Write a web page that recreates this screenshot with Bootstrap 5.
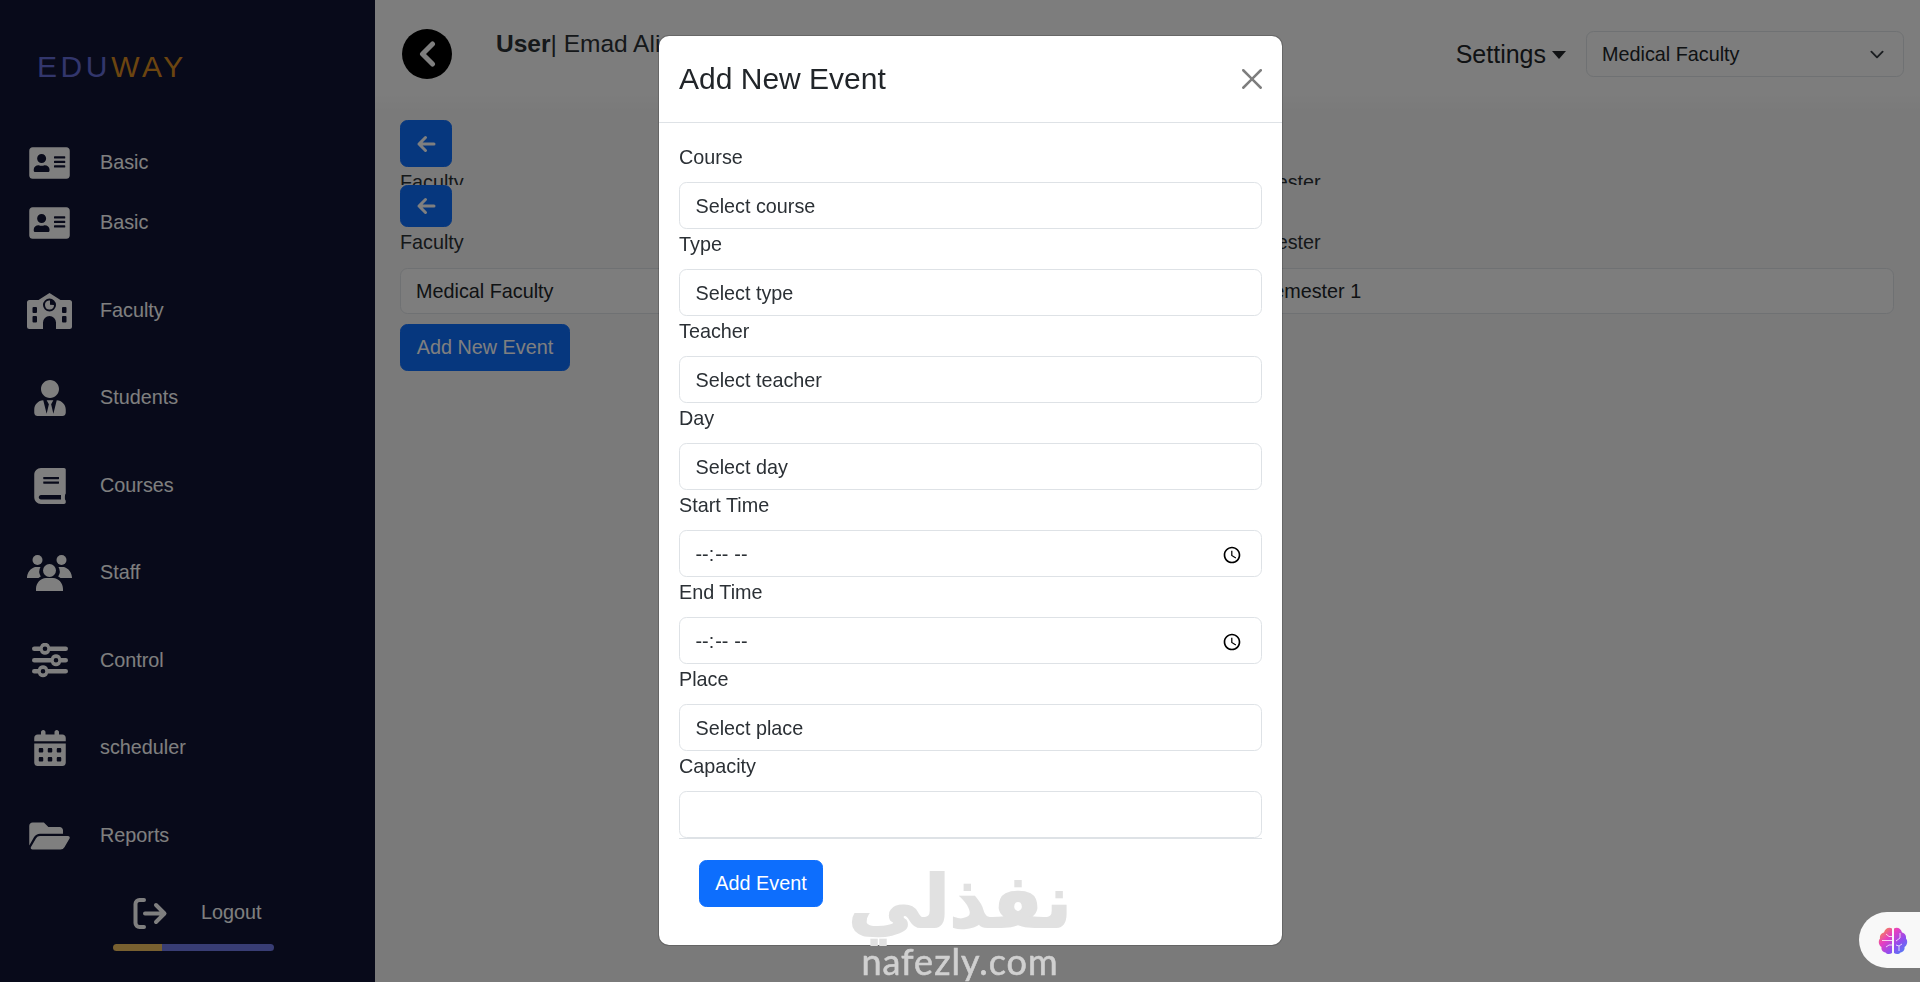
<!DOCTYPE html>
<html lang="en">
<head>
<meta charset="utf-8">
<title>Eduway</title>
<link href="https://cdn.jsdelivr.net/npm/bootstrap@5.3.0/dist/css/bootstrap.min.css" rel="stylesheet">
<style>
html{font-size:19.8px}
body{font-family:"Liberation Sans",Arial,sans-serif;background:#f5f5f5;color:#2b3035;height:982px;overflow:hidden}
.shell{height:982px}
.side{width:375px;flex:none;background:#101434;color:#fff}
.logo{height:132.500px;padding:49px 0 0 37px;font-size:30px;line-height:36px;letter-spacing:3.600px}
.logo-a{color:#646cd8}.logo-b{color:#d88a20}
.side-row{display:flex;align-items:center;height:87.500px;color:#fff;text-decoration:none}
.side-row.tall{height:60px}
.side-row.gap-before{margin-top:14.500px}
.ico-box{width:100px;flex:none;display:flex;justify-content:center;padding-right:1px}
.ico-box svg{fill:#fff;display:block}
.logout-row{display:flex;align-items:center;height:64px;padding:3px 0 0 133px;color:#fff}
.logout-row svg{margin-right:33px}
.meter{width:161px;height:7px;margin-left:113px;border-radius:4px;overflow:hidden}
.meter-a{width:49px;background:#f0c060}.meter-b{flex:1;background:#717ae8}
.main{flex:1;min-width:0}
.top{height:110px;padding:29px 16px 0 27px;background:linear-gradient(#fafafa,#fafafa 95px,#f5f5f5)}
.circle{width:50px;height:50px;background:#000;border-radius:50%;flex:none}
.who{font-size:24.500px;line-height:29px;margin:0 0 0 44px}
.settings{font-size:25px;line-height:30px;color:#212529;text-decoration:none;margin-right:20px;margin-top:10px}
.settings::after{display:inline-block;margin-left:6px;vertical-align:4px;content:"";border-top:8px solid;border-right:7.500px solid transparent;border-left:7.500px solid transparent}
.fac-select{width:318px;height:46px;margin-top:2px;padding:2px 0 0 15px;background-color:transparent;background-size:20px 15px;background-position:right 16px center}
.content{padding:10px 26px 0 25px}
.clip{height:65px;overflow:hidden}
.arrow-btn{width:52px;height:47px;padding:0;display:flex;align-items:center;justify-content:center}
.arrow-btn.short{height:42px}
.pair{display:grid;grid-template-columns:816px 658px;gap:20px}
.pair label{height:41px;line-height:30px;display:block}
.pair .form-control{height:46px;background:#fbfbfb;padding-left:15px}
.pair .second{padding-left:23px}
.add-new{margin-top:10px;height:47px;width:170px;padding:1px 0 0}
.dialog-wrap{display:block}
.dialog-box{width:625px;max-width:625px;margin:35px 0 0 658px}
.dialog-box .modal-content{height:911px;border-radius:11px}
.dialog-head{height:87px;padding:0 20px 1px;display:flex;align-items:center;justify-content:space-between;border-bottom:1px solid #dee2e6;margin-bottom:-1px}
.dialog-head h5{font-size:30px;line-height:36px;margin:0;color:#212529}
.dialog-head .btn-close{margin-right:-5px}
.dialog-scroll{height:717px;margin:0 20px;padding-top:20px;overflow:hidden;border-bottom:1px solid #dee2e6}
.dialog-scroll label{display:block;height:40px;line-height:30px}
.dialog-scroll .form-control{height:47px;padding:9px 15.500px 6px;color:#2b3035}
.dialog-foot{padding:21px 40px 20px}
.add-ev{width:124px;height:47px;padding:0}
.mark-wm{position:fixed;left:845px;top:856px;width:230px;z-index:1060;pointer-events:none;text-align:center}
.wm-ar{font-family:"DejaVu Sans",sans-serif;font-weight:700;font-size:73px;line-height:92px;color:#e1e1e1;-webkit-text-stroke:2px #e1e1e1;direction:rtl}
.wm-la{font-family:"Lato",sans-serif;font-weight:400;font-size:36px;line-height:34px;letter-spacing:1px;color:#d0d0d0;-webkit-text-stroke:.6px #d0d0d0;margin-top:-4px}
.pill{position:fixed;right:0;top:912px;width:61px;height:56px;background:#f8f8f8;border-radius:28px 0 0 28px;z-index:1060;display:flex;align-items:center;padding-left:19px}
</style>
</head>
<body>
<div class="d-flex shell">
  <aside class="side">
    <div class="logo"><span class="logo-a">EDU</span><span class="logo-b">WAY</span></div>
    <a class="side-row tall"><span class="ico-box"><svg width="41" height="36" viewBox="0 0 576 512"><path d="M528 32H48C21.5 32 0 53.5 0 80v352c0 26.5 21.5 48 48 48h480c26.5 0 48-21.5 48-48V80c0-26.5-21.5-48-48-48zm-352 96c35.3 0 64 28.7 64 64s-28.7 64-64 64-64-28.7-64-64 28.7-64 64-64zm112 236.8c0 10.6-10 19.2-22.4 19.2H86.4C74 384 64 375.4 64 364.8v-19.2c0-31.8 30.1-57.6 67.2-57.6h5c12.3 5.1 25.7 8 39.8 8s27.6-2.9 39.8-8h5c37.1 0 67.2 25.8 67.2 57.6v19.2zM512 312c0 4.4-3.6 8-8 8H360c-4.4 0-8-3.6-8-8v-16c0-4.4 3.6-8 8-8h144c4.4 0 8 3.6 8 8v16zm0-64c0 4.4-3.6 8-8 8H360c-4.4 0-8-3.6-8-8v-16c0-4.4 3.6-8 8-8h144c4.4 0 8 3.6 8 8v16zm0-64c0 4.4-3.6 8-8 8H360c-4.4 0-8-3.6-8-8v-16c0-4.4 3.6-8 8-8h144c4.4 0 8 3.6 8 8v16z"/></svg></span>Basic</a>
    <a class="side-row tall"><span class="ico-box"><svg width="41" height="36" viewBox="0 0 576 512"><path d="M528 32H48C21.5 32 0 53.5 0 80v352c0 26.5 21.5 48 48 48h480c26.5 0 48-21.5 48-48V80c0-26.5-21.5-48-48-48zm-352 96c35.3 0 64 28.7 64 64s-28.7 64-64 64-64-28.7-64-64 28.7-64 64-64zm112 236.8c0 10.6-10 19.2-22.4 19.2H86.4C74 384 64 375.4 64 364.8v-19.2c0-31.8 30.1-57.6 67.2-57.6h5c12.3 5.1 25.7 8 39.8 8s27.6-2.9 39.8-8h5c37.1 0 67.2 25.8 67.2 57.6v19.2zM512 312c0 4.4-3.6 8-8 8H360c-4.4 0-8-3.6-8-8v-16c0-4.4 3.6-8 8-8h144c4.4 0 8 3.6 8 8v16zm0-64c0 4.4-3.6 8-8 8H360c-4.4 0-8-3.6-8-8v-16c0-4.4 3.6-8 8-8h144c4.4 0 8 3.6 8 8v16zm0-64c0 4.4-3.6 8-8 8H360c-4.4 0-8-3.6-8-8v-16c0-4.4 3.6-8 8-8h144c4.4 0 8 3.6 8 8v16z"/></svg></span>Basic</a>
    <a class="side-row gap-before"><span class="ico-box"><svg width="45" height="36" viewBox="0 0 45 36"><path fill-rule="evenodd" d="M22.500 0 33.500 7H42.500A2.500 2.500 0 0 1 45 9.500V33.500A2.500 2.500 0 0 1 42.500 36H29V29.500a6.500 6.500 0 0 0-13 0V36H2.500A2.500 2.500 0 0 1 0 33.500V9.500A2.500 2.500 0 0 1 2.500 7H11.500ZM22.500 5.500a6.500 6.500 0 1 0 0 13 6.500 6.500 0 0 0 0-13ZM6.500 14a1 1 0 0 0-1 1v4a1 1 0 0 0 1 1h2.500a1 1 0 0 0 1-1V15a1 1 0 0 0-1-1ZM36 14a1 1 0 0 0-1 1v4a1 1 0 0 0 1 1h2.500a1 1 0 0 0 1-1V15a1 1 0 0 0-1-1ZM6.500 23a1 1 0 0 0-1 1v4.500a1 1 0 0 0 1 1h2.500a1 1 0 0 0 1-1V24a1 1 0 0 0-1-1ZM36 23a1 1 0 0 0-1 1v4.500a1 1 0 0 0 1 1h2.500a1 1 0 0 0 1-1V24a1 1 0 0 0-1-1Z"/><path d="M22 7.500h1v4.200l4 .3a4.500 4.500 0 1 1-5-4.500Z"/></svg></span>Faculty</a>
    <a class="side-row"><span class="ico-box"><svg width="32" height="36" viewBox="0 0 448 512"><path d="M224 256c70.700 0 128-57.300 128-128S294.700 0 224 0 96 57.300 96 128s57.300 128 128 128zm95.800 32.600L272 480l-32-136 32-56h-96l32 56-32 136-47.800-191.400C56.900 292 0 350.300 0 422.400V464c0 26.500 21.500 48 48 48h352c26.500 0 48-21.500 48-48v-41.600c0-72.100-56.900-130.400-128.200-133.800z"/></svg></span>Students</a>
    <a class="side-row"><span class="ico-box"><svg width="32" height="36" viewBox="0 0 448 512"><path d="M448 360V24c0-13.300-10.700-24-24-24H96C43 0 0 43 0 96v320c0 53 43 96 96 96h328c13.300 0 24-10.700 24-24v-16c0-7.500-3.500-14.300-8.900-18.700-4.200-15.400-4.200-59.300 0-74.700 5.400-4.300 8.900-11.100 8.900-18.600zM128 134c0-3.300 2.700-6 6-6h212c3.300 0 6 2.700 6 6v20c0 3.300-2.700 6-6 6H134c-3.300 0-6-2.700-6-6v-20zm0 64c0-3.300 2.700-6 6-6h212c3.300 0 6 2.700 6 6v20c0 3.300-2.700 6-6 6H134c-3.300 0-6-2.700-6-6v-20zm253.400 250H96c-17.700 0-32-14.300-32-32 0-17.600 14.400-32 32-32h285.400c-1.900 17.100-1.900 46.900 0 64z"/></svg></span>Courses</a>
    <a class="side-row"><span class="ico-box"><svg width="45" height="36" viewBox="0 0 45 36"><circle cx="10.500" cy="5" r="5"/><circle cx="34.500" cy="5" r="5"/><circle cx="22.500" cy="15.500" r="6.500"/><path d="M0 23c0-5 3-9.500 8-11h5.500a9 9 0 0 0 .3 9.500c-.9.600-1.700 1-2.300 1.500ZM45 23c0-5-3-9.500-8-11h-5.500a9 9 0 0 1-.3 9.500c.9.600 1.700 1 2.300 1.500ZM9 36v-2c0-6 4.500-11 10-11h7c5.500 0 10 5 10 11v2Z"/></svg></span>Staff</a>
    <a class="side-row"><span class="ico-box"><svg width="36" height="36" viewBox="0 0 36 36"><path fill-rule="evenodd" d="M2.300 3.500H8a5.200 5.200 0 0 1 10 0H33.700a2.300 2.300 0 0 1 0 4.600H18a5.200 5.200 0 0 1-10 0H2.300a2.300 2.300 0 0 1 0-4.600ZM13 3.500a2.300 2.300 0 1 0 0 4.600 2.300 2.300 0 0 0 0-4.600ZM2.300 15H19a5.200 5.200 0 0 1 10 0h4.700a2.300 2.300 0 0 1 0 4.600H29a5.200 5.200 0 0 1-10 0H2.300a2.300 2.300 0 0 1 0-4.600ZM24 15a2.300 2.300 0 1 0 0 4.600 2.300 2.300 0 0 0 0-4.600ZM2.300 26H6a5.200 5.200 0 0 1 10 0H33.700a2.300 2.300 0 0 1 0 4.600H16a5.200 5.200 0 0 1-10 0H2.300a2.300 2.300 0 0 1 0-4.600ZM11 26a2.300 2.300 0 1 0 0 4.600 2.300 2.300 0 0 0 0-4.600Z"/></svg></span>Control</a>
    <a class="side-row"><span class="ico-box"><svg width="32" height="36" viewBox="0 0 448 512"><path d="M128 0c17.700 0 32 14.300 32 32V64H288V32c0-17.700 14.300-32 32-32s32 14.300 32 32V64h48c26.500 0 48 21.500 48 48v48H0V112C0 85.500 21.500 64 48 64H96V32c0-17.700 14.300-32 32-32zM0 192H448V464c0 26.500-21.500 48-48 48H48c-26.500 0-48-21.500-48-48V192zm64 80v32c0 8.800 7.200 16 16 16h32c8.800 0 16-7.200 16-16V272c0-8.800-7.200-16-16-16H80c-8.800 0-16 7.200-16 16zm128 0v32c0 8.800 7.200 16 16 16h32c8.800 0 16-7.200 16-16V272c0-8.800-7.200-16-16-16H208c-8.800 0-16 7.200-16 16zm144-16c-8.800 0-16 7.200-16 16v32c0 8.800 7.200 16 16 16h32c8.800 0 16-7.200 16-16V272c0-8.800-7.200-16-16-16H336zM64 400v32c0 8.800 7.200 16 16 16h32c8.800 0 16-7.200 16-16V400c0-8.800-7.200-16-16-16H80c-8.800 0-16 7.200-16 16zm144-16c-8.800 0-16 7.200-16 16v32c0 8.800 7.200 16 16 16h32c8.800 0 16-7.200 16-16V400c0-8.800-7.200-16-16-16H208zm112 16v32c0 8.800 7.200 16 16 16h32c8.800 0 16-7.200 16-16V400c0-8.800-7.200-16-16-16H336c-8.800 0-16 7.200-16 16z"/></svg></span>scheduler</a>
    <a class="side-row"><span class="ico-box"><svg width="41" height="36" viewBox="0 0 576 512"><path d="M572.694 292.093L500.270 416.248A63.997 63.997 0 0 1 444.989 448H45.025c-18.523 0-30.064-20.093-20.731-36.093l72.424-124.155A64 64 0 0 1 152 256h399.964c18.523 0 30.064 20.093 20.730 36.093zM152 224h328v-48c0-26.510-21.490-48-48-48H272l-64-64H48C21.490 64 0 85.490 0 112v278.046l69.077-118.418C86.214 242.250 117.989 224 152 224z"/></svg></span>Reports</a>
    <div class="logout-row"><svg width="35" height="31" viewBox="0 0 35 31"><path d="M11 2H6.500A4 4 0 0 0 2.500 6V25a4 4 0 0 0 4 4H11" fill="none" stroke="#fff" stroke-width="4" stroke-linecap="round"/><path d="M12 15.500H31M23 7l8.500 8.500L23 24" fill="none" stroke="#fff" stroke-width="4" stroke-linecap="round" stroke-linejoin="round"/></svg>Logout</div>
    <div class="meter d-flex"><div class="meter-a"></div><div class="meter-b"></div></div>
  </aside>
  <main class="main">
    <header class="top d-flex align-items-start">
      <div class="circle d-flex align-items-center justify-content-center"><svg width="18" height="26" viewBox="0 0 18 26"><path d="M14.500 3 4.500 13l10 10" fill="none" stroke="#fff" stroke-width="5" stroke-linecap="round" stroke-linejoin="round"/></svg></div>
      <p class="who"><b>User</b>| Emad Ali</p>
      <div class="ms-auto d-flex align-items-start">
        <a class="settings">Settings</a>
        <select class="form-select fac-select"><option>Medical Faculty</option></select>
      </div>
    </header>
    <section class="content">
      <div class="clip">
        <button class="btn btn-primary arrow-btn" aria-label="Back"><svg width="20" height="18" viewBox="0 0 20 18"><path d="M18 9H3M9.500 2.500 3 9l6.500 6.500" fill="none" stroke="#fff" stroke-width="3" stroke-linecap="round" stroke-linejoin="round"/></svg></button>
        <div class="pair"><label>Faculty</label><label>Semester</label></div>
      </div>
      <button class="btn btn-primary arrow-btn short" aria-label="Back"><svg width="20" height="18" viewBox="0 0 20 18"><path d="M18 9H3M9.500 2.500 3 9l6.500 6.500" fill="none" stroke="#fff" stroke-width="3" stroke-linecap="round" stroke-linejoin="round"/></svg></button>
      <div class="pair">
        <div><label>Faculty</label><input class="form-control" value="Medical Faculty" readonly></div>
        <div><label>Semester</label><input class="form-control second" value="Semester 1" readonly></div>
      </div>
      <button class="btn btn-primary add-new">Add New Event</button>
    </section>
  </main>
</div>

<div class="modal-backdrop fade show"></div>
<div class="modal fade show dialog-wrap" tabindex="-1">
  <div class="modal-dialog dialog-box">
    <div class="modal-content">
      <div class="dialog-head"><h5 class="modal-title">Add New Event</h5><button type="button" class="btn-close" aria-label="Close"></button></div>
      <div class="dialog-scroll">
        <label>Course</label><select class="form-control"><option>Select course</option></select>
        <label>Type</label><select class="form-control"><option>Select type</option></select>
        <label>Teacher</label><select class="form-control"><option>Select teacher</option></select>
        <label>Day</label><select class="form-control"><option>Select day</option></select>
        <label>Start Time</label><input type="time" class="form-control">
        <label>End Time</label><input type="time" class="form-control">
        <label>Place</label><select class="form-control"><option>Select place</option></select>
        <label>Capacity</label><input type="text" class="form-control">
      </div>
      <div class="dialog-foot"><button class="btn btn-primary add-ev">Add Event</button></div>
    </div>
  </div>
</div>

<div class="mark-wm"><div class="wm-ar">نفذلي</div><div class="wm-la">nafezly.com</div></div>
<div class="pill"><svg width="30" height="29" viewBox="0 0 30 29"><defs><linearGradient id="brainfill" x1="0" y1="0" x2="1" y2="1"><stop offset="0" stop-color="#f9a02c"/><stop offset=".35" stop-color="#e83fc0"/><stop offset=".65" stop-color="#8f4df0"/><stop offset="1" stop-color="#3f8cf5"/></linearGradient></defs><path fill="url(#brainfill)" d="M14 2.500V27c-2 1.500-5 1.500-6.500-.500C4.500 26 3 23.500 3.500 21 .5 19 0 15 2 12.500 1.500 9 3.500 7 6 6.500 7 3 10.500.5 14 2.500ZM16 2.500V27c2 1.500 5 1.500 6.500-.500 3-.500 4.500-3 4-5.500 3-2 3.500-6 1.500-8.500.5-3.500-1.500-5.500-4-6C23 3 19.500.5 16 2.500Z"/><path d="M4 14.500H14M8 8l3 2.500H14M8 21l3-2H14M22 7v5l-4 3M24 18l-3 2-3-1M21 20v5" fill="none" stroke="#fff" stroke-width="1" opacity=".75"/></svg></div>
<script src="https://cdn.jsdelivr.net/npm/bootstrap@5.3.0/dist/js/bootstrap.bundle.min.js"></script>
</body>
</html>
